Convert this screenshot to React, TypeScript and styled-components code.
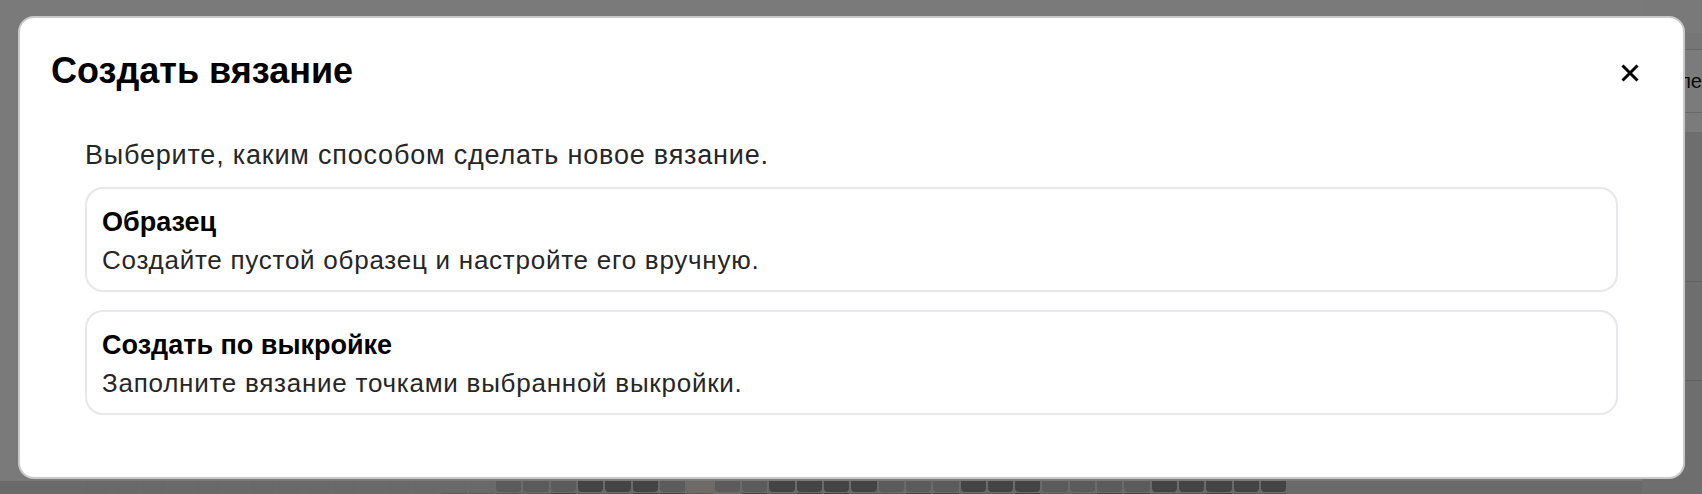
import React from "react";
import styled, { createGlobalStyle } from "styled-components";

const GlobalStyle = createGlobalStyle`
  html, body {
    margin: 0;
    padding: 0;
  }
  body {
    width: 1702px;
    height: 494px;
    overflow: hidden;
    font-family: "Liberation Sans", Arial, Helvetica, sans-serif;
  }
  * {
    box-sizing: border-box;
  }
`;

/* ---------- background page (under the overlay) ---------- */

const Page = styled.div`
  display: flex;
  width: 1702px;
  height: 494px;
  overflow: hidden;
  background: #f4f4f4;
`;

const Main = styled.main`
  flex: 1;
  display: flex;
  flex-direction: column;
`;

const Workspace = styled.div`
  flex: 0 0 481px;
  background: #f4f4f4;
`;

const TileGrid = styled.div`
  display: grid;
  grid-template-columns: repeat(44, 25.33px);
  grid-auto-rows: 11px;
  column-gap: 2px;
  row-gap: 1px;
  padding-left: 86px;
  background: #d4d4d4;
`;

const Tile = styled.div<{ $c: string }>`
  background: ${(p) => p.$c};
  border-radius: 0 0 4px 4px;
`;

const Sidebar = styled.aside`
  flex: 0 0 40px;
  display: flex;
  flex-direction: column;
  background: #f6f6f6;
`;

const SideTop = styled.div`
  flex: 0 0 33px;
  background: #f2f2f2;
`;

const SideTabs = styled.div`
  flex: 0 0 17px;
  background: #ececec;
  border-bottom: 1px solid #d2d2d2;
`;

const SideField = styled.div`
  flex: 0 0 63px;
  display: flex;
  align-items: center;
  padding-left: 16px;
  font-size: 20px;
  color: #111;
  white-space: nowrap;
  border-bottom: 1px solid #d2d2d2;
`;

const SideGap = styled.div`
  flex: 0 0 19px;
`;

const SideList = styled.div`
  flex: 1;
  display: flex;
  flex-direction: column;
  background: #dcdcdc;
`;

const SideItem = styled.div<{ $h: number }>`
  flex: 0 0 ${(p) => p.$h}px;
  display: flex;
  align-items: center;
  padding-left: 28px;
  font-size: 18px;
  color: #111;
  border-bottom: 1px solid #c4c4c4;
`;

const SideFoot = styled.div`
  flex: 1;
  padding: 50px 0 0 22px;
  font-size: 20px;
  font-weight: 700;
  color: #000;
  white-space: nowrap;
`;

/* ---------- modal ---------- */

const Overlay = styled.div`
  position: fixed;
  inset: 0;
  display: flex;
  padding: 16px 17px 15px 18px;
  background: rgba(0, 0, 0, 0.5);
`;

const Modal = styled.div`
  flex: 1;
  display: flex;
  flex-direction: column;
  padding: 31px;
  background: #ffffff;
  border: 2px solid #c9c9c9;
  border-radius: 16px;
`;

const Header = styled.div`
  display: flex;
  justify-content: space-between;
  align-items: flex-start;
`;

const Title = styled.h2`
  margin: 0;
  font-size: 36px;
  line-height: 43px;
  font-weight: 700;
  color: #000;
`;

const CloseButton = styled.button`
  width: 38px;
  height: 38px;
  margin: 5px 3px 0 0;
  padding: 0;
  display: flex;
  align-items: center;
  justify-content: center;
  background: transparent;
  border: none;
  cursor: pointer;
`;

const Body = styled.div`
  margin-top: 47px;
  padding: 0 34px;
`;

const Lead = styled.p`
  margin: 0 0 16px;
  font-size: 27px;
  line-height: 32px;
  letter-spacing: 0.8px;
  color: #262626;
`;

const OptionList = styled.div`
  display: flex;
  flex-direction: column;
  gap: 18px;
`;

const OptionCard = styled.div`
  padding: 18px 15px 14px;
  background: #fff;
  border: 2px solid #e7e7ec;
  border-radius: 18px;
  cursor: pointer;
`;

const OptionTitle = styled.div`
  font-size: 27px;
  line-height: 31px;
  font-weight: 700;
  color: #000;
`;

const OptionText = styled.div`
  margin-top: 7px;
  font-size: 26px;
  line-height: 31px;
  letter-spacing: 0.75px;
  color: #262626;
`;

const L = "#d2d2d2";
const M = "#b6b6b6";
const D = "#888888";
const X = "#dcd6d0";

const row1 = [
  ...Array(15).fill(L),
  M, M, M, D, D, D, M, X, M, M, D, D, D, D, M, M, M, D, D, D, M, M, M, M, D, D, D, D, D,
];
const row2 = [
  ...Array(13).fill(L),
  M, M, M, M, D, M, M, D, D, M, X, D, M, D, D, M, M, D, D, M, M, D, M, M, D, D, M, M, D, M, M,
];

const options = [
  { title: "Образец", text: "Создайте пустой образец и настройте его вручную." },
  { title: "Создать по выкройке", text: "Заполните вязание точками выбранной выкройки." },
];

export default function App() {
  return (
    <>
      <GlobalStyle />
      <Page>
        <Main>
          <Workspace />
          <TileGrid>
            {row1.map((c, i) => (
              <Tile key={"a" + i} $c={c} />
            ))}
            {row2.map((c, i) => (
              <Tile key={"b" + i} $c={c} />
            ))}
          </TileGrid>
        </Main>
        <Sidebar>
          <SideTop />
          <SideTabs />
          <SideField>поле</SideField>
          <SideGap />
          <SideList>
            <SideItem $h={150} />
            <SideItem $h={99}>×</SideItem>
            <SideFoot>l з</SideFoot>
          </SideList>
        </Sidebar>
      </Page>
      <Overlay>
        <Modal role="dialog" aria-modal="true">
          <Header>
            <Title>Создать вязание</Title>
            <CloseButton aria-label="Закрыть">
              <svg width="18" height="18" viewBox="0 0 18 18">
                <path
                  d="M1.5 1.5 L16.5 16.5 M16.5 1.5 L1.5 16.5"
                  stroke="#000"
                  strokeWidth="3"
                  fill="none"
                />
              </svg>
            </CloseButton>
          </Header>
          <Body>
            <Lead>Выберите, каким способом сделать новое вязание.</Lead>
            <OptionList>
              {options.map((o) => (
                <OptionCard key={o.title}>
                  <OptionTitle>{o.title}</OptionTitle>
                  <OptionText>{o.text}</OptionText>
                </OptionCard>
              ))}
            </OptionList>
          </Body>
        </Modal>
      </Overlay>
    </>
  );
}
